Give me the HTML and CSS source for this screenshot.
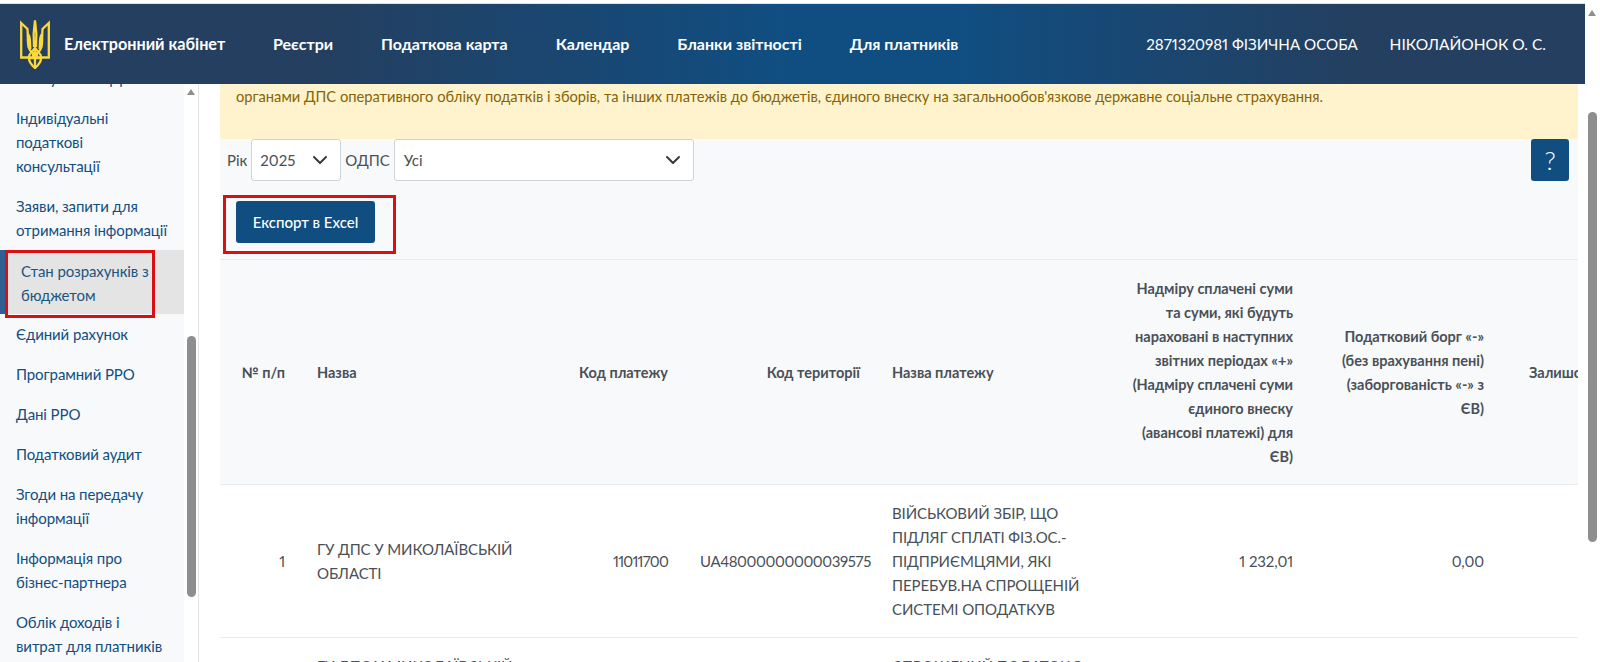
FILE: index.html
```html
<!DOCTYPE html>
<html lang="uk">
<head>
<meta charset="utf-8">
<title>Електронний кабінет</title>
<link rel="stylesheet" href="styles.css">
</head>
<body>
<div class="app">
  <div class="page">
    <header class="navbar">
      <svg class="logo" viewBox="0 0 30 49" aria-hidden="true">
        <g fill="none" stroke="#fbd83c" stroke-width="2.3" stroke-linejoin="miter">
          <path d="M1.200 3 L7.500 9 C8 15 7.500 22 8.500 27 C9.500 31 11.500 32 13 33 V37.500 H1.200 Z"/>
          <path d="M28.800 3 L22.500 9 C22 15 22.500 22 21.500 27 C20.500 31 18.500 32 17 33 V37.500 H28.800 Z"/>
          <path d="M15 0.500 C13.800 8 13.200 18 14 27 M15 0.500 C16.200 8 16.800 18 16 27"/>
          <path d="M10.500 29 C9.500 24 11 17 8 14 M19.500 29 C20.500 24 19 17 22 14"/>
          <path d="M15 48 C10 44 8.500 40 9 36.500 C9.500 33 13 31 15 28 C17 31 20.500 33 21 36.500 C21.500 40 20 44 15 48 Z"/>
          <path d="M15 28 V48 M9 38 H21"/>
        </g>
      </svg>
      <a class="brand">Електронний кабінет</a>
      <nav class="menu">
        <a>Реєстри</a>
        <a>Податкова карта</a>
        <a>Календар</a>
        <a>Бланки звітності</a>
        <a>Для платників</a>
      </nav>
      <div class="user">
        <span class="user-id">2871320981 ФІЗИЧНА ОСОБА</span>
        <span>НІКОЛАЙОНОК О. С.</span>
      </div>
    </header>
    <div class="body">
      <aside class="sidebar">
        <ul class="side-list">
          <li class="side-item">Листування з ДПС</li>
          <li class="side-item">Індивідуальні<br>податкові<br>консультації</li>
          <li class="side-item">Заяви, запити для<br>отримання інформації</li>
          <li class="side-item active">Стан розрахунків з<br>бюджетом</li>
          <li class="side-item">Єдиний рахунок</li>
          <li class="side-item">Програмний РРО</li>
          <li class="side-item">Дані РРО</li>
          <li class="side-item">Податковий аудит</li>
          <li class="side-item">Згоди на передачу<br>інформації</li>
          <li class="side-item">Інформація про<br>бізнес-партнера</li>
          <li class="side-item">Облік доходів і<br>витрат для платників</li>
        </ul>
        <div class="mark mark-side"></div>
      </aside>
      <div class="side-scroll">
        <span class="arrow"></span>
        <span class="thumb thumb-side"></span>
      </div>
      <main class="main">
        <div class="alert">органами ДПС оперативного обліку податків і зборів, та інших платежів до бюджетів, єдиного внеску на загальнообов'язкове державне соціальне страхування.</div>
        <div class="filters">
          <label class="lbl">Рік</label>
          <div class="select select-year"><span>2025</span><svg class="chev" viewBox="0 0 16 16"><path d="M2 5l6 6 6-6" fill="none" stroke="#343a40" stroke-width="2" stroke-linecap="round" stroke-linejoin="round"/></svg></div>
          <label class="lbl">ОДПС</label>
          <div class="select select-odps"><span>Усі</span><svg class="chev" viewBox="0 0 16 16"><path d="M2 5l6 6 6-6" fill="none" stroke="#343a40" stroke-width="2" stroke-linecap="round" stroke-linejoin="round"/></svg></div>
          <button class="btn help">?</button>
        </div>
        <div class="export-row">
          <button class="btn export">Експорт в Excel</button>
          <div class="mark mark-export"></div>
        </div>
        <div class="table-wrap">
          <table class="grid">
            <colgroup>
              <col class="c1"><col class="c2"><col class="c3"><col class="c4"><col class="c5"><col class="c6"><col class="c7"><col class="c8">
            </colgroup>
            <thead>
              <tr>
                <th class="r">№ п/п</th>
                <th>Назва</th>
                <th class="r">Код платежу</th>
                <th class="r">Код території</th>
                <th>Назва платежу</th>
                <th class="r">Надміру сплачені суми та суми, які будуть нараховані в наступних звітних періодах «+» (Надміру сплачені суми єдиного внеску (авансові платежі) для ЄВ)</th>
                <th class="r">Податковий борг «-» (без врахування пені) (заборгованість «-» з ЄВ)</th>
                <th class="r"><span class="last">Залишок</span></th>
              </tr>
            </thead>
            <tbody>
              <tr>
                <td class="r">1</td>
                <td>ГУ ДПС У МИКОЛАЇВСЬКІЙ ОБЛАСТІ</td>
                <td class="r code">11011700</td>
                <td class="r nowrap">UA48000000000039575</td>
                <td>ВІЙСЬКОВИЙ ЗБІР, ЩО ПІДЛЯГ СПЛАТІ ФІЗ.ОС.-ПІДПРИЄМЦЯМИ, ЯКІ ПЕРЕБУВ.НА СПРОЩЕНІЙ СИСТЕМІ ОПОДАТКУВ</td>
                <td class="r">1 232,01</td>
                <td class="r">0,00</td>
                <td></td>
              </tr>
              <tr>
                <td class="r">2</td>
                <td>ГУ ДПС У МИКОЛАЇВСЬКІЙ ОБЛАСТІ</td>
                <td class="r code">18050400</td>
                <td class="r nowrap">UA48000000000039575</td>
                <td>СПРОЩЕНИЙ ПОДАТОК З ФІЗИЧНИХ ОСІБ</td>
                <td class="r">0,00</td>
                <td class="r">0,00</td>
                <td></td>
              </tr>
            </tbody>
          </table>
        </div>
      </main>
      <div class="page-gutter"></div>
    </div>
  </div>
  <div class="page-scroll">
    <span class="arrow arrow-page"></span>
    <span class="thumb thumb-page"></span>
  </div>
</div>
</body>
</html>
```
FILE: styles.css
```css
* { box-sizing: border-box; }
html, body { margin: 0; height: 100%; overflow: hidden; background: #fff; }
body { font-family: "Lato", "Noto Sans", sans-serif; font-size: 15px; line-height: 24px; color: #495057; font-variant-numeric: proportional-nums; }
.app { display: flex; height: 662px; }
.page { width: 1585px; padding-top: 4px; display: flex; flex-direction: column; position: relative; }
.navbar {
  height: 80px; flex: none; display: flex; align-items: center; padding-left: 20px; color: #fff;
  background: linear-gradient(90deg, #243f5f 0%, #243f5f 20%, #104e82 50%, #104e82 60%, #243f5f 86%, #243f5f 100%);
  box-shadow: 0 -1px 0 #e3e3e3;
}
.logo { width: 30px; height: 49px; flex: none; }
.brand { font-size: 16.2px; font-weight: 700; margin-left: 14px; white-space: nowrap; width: 209px; }
.menu { display: flex; gap: 48px; font-size: 16px; font-weight: 700; white-space: nowrap; }
.user { margin-left: auto; display: flex; gap: 32px; padding-right: 39px; font-size: 15.500px; white-space: nowrap; }
.user-id { font-size: 15.150px; }
.body { flex: 1; min-height: 0; display: flex; overflow: hidden; }
.sidebar { width: 184px; flex: none; background: #f8f9fa; position: relative; overflow: hidden; }
.side-list { list-style: none; margin: -26px 0 0; padding: 0; color: #104e82; }
.side-item { padding: 8px 0 8px 16px; white-space: nowrap; letter-spacing: -.1px; }
.side-item.active { background: #e4e4e4; padding: 9px 0 0 21px; box-shadow: inset 5px 0 0 #2f5f93; color: #1a5580; height: 64px; }
.mark { position: absolute; border: 3px solid #d90f14; pointer-events: none; }
.mark-side { left: 5px; top: 166px; width: 150px; height: 68px; }
.side-scroll { width: 15px; flex: none; position: relative; background: #fff; border-right: 1px solid #e3e5e8; }
.arrow { position: absolute; left: 3px; top: 5px; width: 0; height: 0; border: 4.5px solid transparent; border-top: 0; border-bottom: 6px solid #8e8e8e; }
.thumb { position: absolute; left: 3px; width: 9px; background: #8e8e8e; border-radius: 5px; }
.thumb-side { top: 252px; height: 261px; }
.main { width: 1358px; margin-left: 21px; flex: none; background: #f8f9fa; overflow: hidden; display: flex; flex-direction: column; }
.page-gutter { flex: 1; }
.alert { height: 55px; flex: none; background: #fff3cd; color: #856404; padding: 0 16px; border-radius: 0 0 3px 3px; font-size: 14.700px; }
.filters { display: flex; align-items: center; height: 42px; flex: none; gap: 4px; padding-left: 7px; }
.lbl { font-size: 15px; color: #495057; }
.select { height: 42px; background: #fff; border: 1px solid #ced4da; border-radius: 3px; display: flex; align-items: center; justify-content: space-between; padding: 0 12px 0 8px; font-size: 15px; }
.select-year { width: 90px; }
.select-odps { width: 300px; padding-left: 9px; }
.chev { width: 16px; height: 16px; }
.btn { font-family: inherit; border: 0; color: #fff; background: #104e82; border-radius: 3px; padding: 0; }
.help { margin-left: auto; margin-right: 9px; width: 38px; height: 42px; font-size: 26px; font-weight: 300; }
.export-row { position: relative; height: 78px; flex: none; padding: 20px 0 0 16px; }
.export { width: 139px; height: 42px; font-size: 15px; font-weight: 500; }
.mark-export { left: 3px; top: 14px; width: 173px; height: 59px; }
.table-wrap { flex: 1; min-height: 0; overflow: hidden; border-top: 1px solid #e9ecef; }
.grid { table-layout: fixed; border-collapse: collapse; width: 1440px; }
.c1 { width: 81px; } .c2 { width: 240px; } .c3 { width: 143px; } .c4 { width: 192px; } .c5 { width: 236px; } .c6 { width: 197px; } .c7 { width: 191px; } .c8 { width: 160px; }
th, td { padding: 16px; text-align: left; vertical-align: middle; overflow-wrap: break-word; }
.grid .r { text-align: right; }
th { font-weight: 700; color: #495057; font-size: 14.500px; border-bottom: 1px solid #e9ecef; background: #f8f9fa; padding-top: 17px; padding-bottom: 15px; }
td { background: #fff; border-bottom: 1px solid #e9ecef; font-size: 15px; letter-spacing: -.1px; }
.grid .code { letter-spacing: -.8px; }
.grid .nowrap { white-space: nowrap; letter-spacing: -.4px; }
.last { display: block; text-align: left; padding-left: 13px; white-space: nowrap; }
.page-scroll { width: 15px; flex: none; position: relative; background: #fff; }
.arrow-page { top: 10px; }
.thumb-page { top: 112px; height: 430px; }
```
